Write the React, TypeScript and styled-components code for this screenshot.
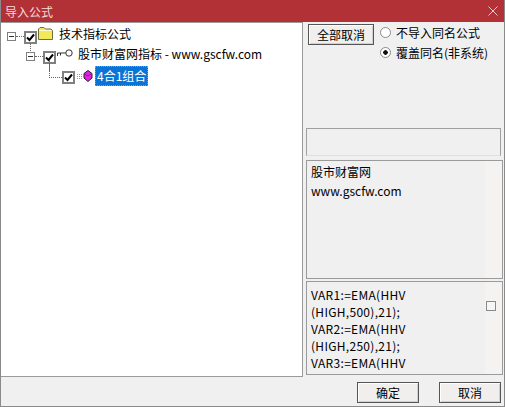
import React, { FC } from "react";
import styled, { createGlobalStyle } from "styled-components";

const GlobalStyle = createGlobalStyle`
  html, body {
    margin: 0;
    padding: 0;
    background: #f0f0f0;
  }
  body {
    font-family: "Noto Sans CJK SC", "Noto Sans", sans-serif;
    font-size: 12px;
    color: #000;
  }
`;

const Window = styled.div`
  width: 505px;
  height: 407px;
  box-sizing: border-box;
  display: flex;
  flex-direction: column;
  background: #f0f0f0;
  border: 1px solid #8a8a8a;
  border-top: none;
  overflow: hidden;
`;

const TitleBar = styled.div`
  height: 22px;
  margin: 0 -1px;
  padding: 0 7px 0 5px;
  flex: none;
  display: flex;
  align-items: center;
  justify-content: space-between;
  background: #b13136;
  color: #f3dcdc;
  font-size: 12px;
`;

const Body = styled.div`
  height: 355px;
  flex: none;
  display: flex;
  gap: 2px;
`;

const TreePanel = styled.div`
  width: 302px;
  box-sizing: border-box;
  flex: none;
  padding-top: 3px;
  background: #fff;
  border: 1px solid #9a9a9a;
  border-left: none;
`;

const TreeRow = styled.div<{ $indent: number }>`
  height: 20px;
  display: flex;
  align-items: center;
  padding-left: ${({ $indent }) => $indent}px;
`;

const Expander = styled.span`
  position: relative;
  width: 9px;
  height: 9px;
  box-sizing: border-box;
  flex: none;
  margin-right: 8px;
  border: 1px solid #7f7f7f;
  background: #fff;
  &::before {
    content: "";
    position: absolute;
    left: 1px;
    right: 1px;
    top: 3px;
    height: 1px;
    background: #333;
  }
  &::after {
    content: "";
    position: absolute;
    left: 8px;
    top: 3px;
    width: 8px;
    border-top: 1px dotted #666;
  }
`;

const Check = styled.span<{ $elbow?: boolean; $drop?: boolean }>`
  position: relative;
  width: 13px;
  height: 13px;
  box-sizing: border-box;
  flex: none;
  margin-top: 2px;
  border: 2px solid #808080;
  background: #fff;
  display: flex;
  align-items: center;
  justify-content: center;
  &::before {
    content: "";
    display: ${({ $elbow }) => ($elbow ? "block" : "none")};
    position: absolute;
    left: -15px;
    top: -13px;
    width: 12px;
    height: 17px;
    border-left: 1px dotted #666;
    border-bottom: 1px dotted #666;
  }
  &::after {
    content: "";
    display: ${({ $drop }) => ($drop ? "block" : "none")};
    position: absolute;
    left: 4px;
    top: 11px;
    height: 7px;
    border-left: 1px dotted #666;
  }
`;

const NodeIcon = styled.svg<{ $gap: number; $lift: number }>`
  flex: none;
  margin-left: 1px;
  margin-right: ${({ $gap }) => $gap}px;
  margin-top: ${({ $lift }) => -$lift}px;
`;

const NodeLabel = styled.span`
  white-space: nowrap;
  line-height: 18px;
  margin-top: -4px;
`;

const SelectedLabel = styled.span`
  height: 20px;
  box-sizing: border-box;
  padding: 0 2px;
  margin-top: -1px;
  display: flex;
  align-items: center;
  background: #0a74d6;
  color: #fff;
  white-space: nowrap;
  outline: 1px dotted #e08a20;
  outline-offset: -1px;
`;

const SidePanel = styled.div`
  flex: 1;
  min-width: 0;
  display: flex;
  flex-direction: column;
`;

const OptionsArea = styled.div`
  height: 106px;
  box-sizing: border-box;
  flex: none;
  padding: 2px 0 0 3px;
  display: flex;
  gap: 6px;
`;

const PushButton = styled.button<{ $width: number }>`
  width: ${({ $width }) => $width}px;
  height: 21px;
  padding: 0;
  flex: none;
  font: inherit;
  font-size: 12px;
  color: #000;
  background: #f0efed;
  border: 1px solid #555;
  box-shadow: inset 1px 1px 0 #fff, inset -1px -1px 0 #d0d0d0;
`;

const RadioGroup = styled.div`
  display: flex;
  flex-direction: column;
  margin-top: -2px;
`;

const RadioRow = styled.div`
  height: 20px;
  display: flex;
  align-items: center;
  gap: 5px;
  font-size: 12px;
  white-space: nowrap;
`;

const RadioDot = styled.span<{ $on?: boolean }>`
  width: 11px;
  height: 11px;
  box-sizing: border-box;
  flex: none;
  border-radius: 50%;
  border: 1px solid #8a8a8a;
  background: ${({ $on }) =>
    $on ? "radial-gradient(circle, #111 0 2px, #fff 2.5px)" : "#fff"};
`;

const EmptyField = styled.div`
  width: 195px;
  height: 28px;
  box-sizing: border-box;
  flex: none;
  margin: 0 0 4px 1px;
  border: 1px solid #a0a0a0;
  border-bottom-color: #e0e0e0;
`;

const TextPanel = styled.div<{ $height: number }>`
  height: ${({ $height }) => $height}px;
  box-sizing: border-box;
  flex: none;
  margin: 0 0 2px 1px;
  width: 197px;
  display: flex;
  border: 1px solid #9a9a9a;
  background: #f4f3f1;
`;

const TextContent = styled.div<{ $lineHeight: number }>`
  width: 178px;
  flex: none;
  box-sizing: border-box;
  padding: 1px 0 0 4px;
  background: #f0f0f0;
  line-height: ${({ $lineHeight }) => $lineHeight}px;
`;

const CodeText = styled(TextContent)`
  letter-spacing: 0.3px;
  padding-top: 4px;
`;

const Gutter = styled.div`
  flex: 1;
  display: flex;
  padding: 19px 0 0 1px;
`;

const SmallBox = styled.span`
  width: 10px;
  height: 10px;
  box-sizing: border-box;
  border: 1px solid #8a8a8a;
  background: #f6f6f6;
`;

const Footer = styled.div`
  flex: 1;
  display: flex;
  justify-content: flex-end;
  align-items: flex-start;
  gap: 20px;
  padding: 5px 3px 0 0;
`;

const CheckMark: FC = () => (
  <svg width="9" height="9" viewBox="0 0 9 9">
    <path d="M1 4.5 L3.5 7 L8 1.5" fill="none" stroke="#000" strokeWidth="2" />
  </svg>
);

const App: FC = () => {
  return (
    <>
      <GlobalStyle />
      <Window>
        <TitleBar>
          <span>导入公式</span>
          <svg width="10" height="10" viewBox="0 0 10 10">
            <path d="M0.5 0.5 L9.5 9.5 M9.5 0.5 L0.5 9.5" stroke="#e8c8c8" strokeWidth="1" />
          </svg>
        </TitleBar>
        <Body>
          <TreePanel>
            <TreeRow $indent={6}>
              <Expander />
              <Check $drop>
                <CheckMark />
              </Check>
              <NodeIcon $gap={6} $lift={5} width="15" height="13" viewBox="0 0 15 13">
                <path d="M0.5 12.5 L0.5 2 L2 0.5 L6 0.5 L7.5 2 L13 2 L14.5 3.5 L14.5 12.5 Z" fill="#f4e85a" stroke="#70703a" />
                <path d="M1.5 3.5 H13" stroke="#fffbd0" />
              </NodeIcon>
              <NodeLabel>技术指标公式</NodeLabel>
            </TreeRow>
            <TreeRow $indent={25}>
              <Expander />
              <Check $drop>
                <CheckMark />
              </Check>
              <NodeIcon $gap={5} $lift={6} width="16" height="9" viewBox="0 0 16 9">
                <circle cx="12" cy="4" r="3.2" fill="#fff" stroke="#333" />
                <path d="M8.8 4 L0.5 4 L0.5 7 M3.5 4 L3.5 6.5" stroke="#333" fill="none" />
              </NodeIcon>
              <NodeLabel>股市财富网指标 - www.gscfw.com</NodeLabel>
            </TreeRow>
            <TreeRow $indent={61}>
              <Check $elbow>
                <CheckMark />
              </Check>
              <NodeIcon $gap={2} $lift={0} width="17" height="12" viewBox="0 0 17 12">
                <path d="M1 4.5 H7 M1 6.5 H7 M1 8.5 H7" stroke="#999" strokeDasharray="1 1" />
                <path d="M12 0.5 L16 3.5 L16 8 L12 11.5 L8 8 L8 3.5 Z" fill="#e61ee6" stroke="#222" />
                <path d="M9 4 L12 6 L15 4" fill="none" stroke="#a010a0" />
              </NodeIcon>
              <SelectedLabel>4合1组合</SelectedLabel>
            </TreeRow>
          </TreePanel>
          <SidePanel>
            <OptionsArea>
              <PushButton $width={66}>全部取消</PushButton>
              <RadioGroup>
                <RadioRow>
                  <RadioDot />
                  不导入同名公式
                </RadioRow>
                <RadioRow>
                  <RadioDot $on />
                  覆盖同名(非系统)
                </RadioRow>
              </RadioGroup>
            </OptionsArea>
            <EmptyField />
            <TextPanel $height={119}>
              <TextContent $lineHeight={19}>
                股市财富网
                <br />
                www.gscfw.com
              </TextContent>
              <Gutter />
            </TextPanel>
            <TextPanel $height={94}>
              <CodeText $lineHeight={17}>
                VAR1:=EMA(HHV
                <br />
                (HIGH,500),21);
                <br />
                VAR2:=EMA(HHV
                <br />
                (HIGH,250),21);
                <br />
                VAR3:=EMA(HHV
              </CodeText>
              <Gutter>
                <SmallBox />
              </Gutter>
            </TextPanel>
          </SidePanel>
        </Body>
        <Footer>
          <PushButton $width={62}>确定</PushButton>
          <PushButton $width={62}>取消</PushButton>
        </Footer>
      </Window>
    </>
  );
};

export default App;
